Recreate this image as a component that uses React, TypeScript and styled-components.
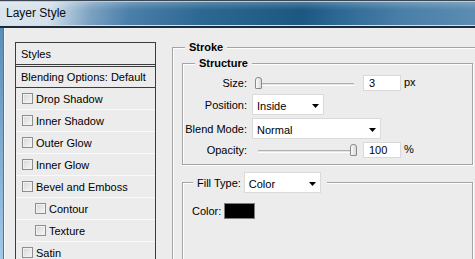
import React from "react";
import styled, { createGlobalStyle } from "styled-components";

const GlobalStyle = createGlobalStyle`
  html, body { margin: 0; padding: 0; width: 475px; height: 259px; overflow: hidden; background: #ececec; }
  #root { width: 475px; height: 259px; }
  * { box-sizing: border-box; }
`;

const UI_FONT = `"Liberation Sans", Arial, sans-serif`;

const Window = styled.div`
  width: 475px;
  height: 259px;
  display: flex;
  flex-direction: column;
  overflow: hidden;
  background: #ececec;
  font-family: ${UI_FONT};
  font-size: 11px;
  color: #000;
`;

const TitleBar = styled.div`
  flex: 0 0 28px;
  display: flex;
  align-items: center;
  padding: 0 0 1px 6px;
  border-top: 1px solid #3b4650;
  border-bottom: 2px solid #1b2b39;
  box-shadow: inset 0 -1px 0 #cfe0ee, inset 0 1px 0 #b9cfe0;
  background:
    linear-gradient(to bottom, rgba(255,255,255,0.25) 0, rgba(255,255,255,0.1) 5px, rgba(255,255,255,0) 9px),
    linear-gradient(100deg, #d9e4ed 0, #d6e1eb 50px, #aac3d8 70px, #7aa1c1 92px, #4a7fa9 130px, #2d6893 200px, #1c5782 300px, #2c6894 335px, #4a7fa8 400px, #5d8db2 475px);
`;

const Title = styled.span`
  font-family: "Liberation Sans", Arial, sans-serif;
  font-size: 12px;
  color: #0b0b0b;
`;

const Body = styled.div`
  flex: 1;
  display: flex;
  min-height: 0;
`;

const Frame = styled.div`
  flex: 0 0 5px;
  background:
    linear-gradient(to right, transparent 0 3px, #62717f 3px 4px, #f6f9fb 4px 5px),
    linear-gradient(to bottom, #5a8db6, #a3c8e6);
`;

const Content = styled.div`
  flex: 1;
  display: flex;
  align-items: flex-start;
  gap: 16px;
  padding: 14px 0 0 10px;
  overflow: hidden;
`;

const StylesPanel = styled.div`
  flex: 0 0 141px;
  width: 141px;
  height: 240px;
  border: 1px solid #3c3c3c;
  border-bottom: none;
  display: flex;
  flex-direction: column;
`;

const PanelHead = styled.div<{ $double?: boolean }>`
  height: ${(p) => (p.$double ? 24 : 21)}px;
  display: flex;
  align-items: center;
  padding-left: 5px;
  border-bottom: ${(p) => (p.$double ? "3px double #3c3c3c" : "1px solid #3c3c3c")};
  white-space: nowrap;
`;

const PanelItem = styled.div<{ $indent?: boolean }>`
  flex: 0 0 22px;
  display: flex;
  align-items: center;
  gap: 3px;
  padding-left: ${(p) => (p.$indent ? 19 : 6)}px;
  border-bottom: 1px solid #f9f9f9;
  white-space: nowrap;
`;

const Check = styled.span`
  width: 11px;
  height: 11px;
  border: 1px solid #8e8e8e;
  background: linear-gradient(135deg, #d6d6d6, #f7f7f7);
  box-shadow: inset 0 0 0 1px #f1f1f1;
`;

const Group = styled.fieldset<{ $w: number; $h?: number }>`
  margin: 0;
  width: ${(p) => p.$w}px;
  ${(p) => (p.$h ? `height: ${p.$h}px;` : "")}
  min-width: 0;
  flex-shrink: 0;
  border: 1px solid #a4a4a4;
  box-shadow: inset 1px 1px 0 #fdfdfd, 1px 1px 0 #fdfdfd;
`;

const StrokeGroup = styled(Group)`
  margin-top: -2px;
  padding: 2px 9px 0 9px;
`;

const SubGroup = styled(Group)`
  padding: 0;
`;

const FillGroup = styled(Group)`
  margin-top: 7px;
  padding: 10px 0 0 9px;
`;

const Legend = styled.legend<{ $ml: number }>`
  margin-left: ${(p) => p.$ml}px;
  padding: 0 4px;
  height: 14px;
  line-height: 14px;
  font-weight: bold;
  background: #ececec;
`;

const ControlLegend = styled.legend`
  margin-left: 1px;
  padding: 0 6px 0 4px;
  display: flex;
  align-items: center;
  gap: 3px;
  background: #ececec;
`;

const FormGrid = styled.div`
  display: grid;
  grid-template-columns: 64px auto;
  column-gap: 5px;
  row-gap: 3px;
  align-items: center;
  padding: 5px 0 6px 0;
`;

const Label = styled.span`
  text-align: right;
  white-space: nowrap;
`;

const Controls = styled.div`
  display: flex;
  align-items: center;
  height: 16px;
`;

const SliderBox = styled.div`
  position: relative;
  width: 102px;
  height: 14px;
  margin-left: 3px;
  margin-right: 6px;
`;

const Track = styled.div`
  position: absolute;
  left: 3px;
  right: 3px;
  top: 7px;
  height: 3px;
  border-top: 1px solid #b0b0b0;
  border-bottom: 1px solid #fdfdfd;
  background: #e4e4e4;
`;

const Thumb = styled.div`
  position: absolute;
  top: 1px;
  width: 7px;
  height: 12px;
  border: 1px solid #8a8a8a;
  border-radius: 3px 3px 1px 1px;
  background: linear-gradient(to right, #fafafa, #d9d9d9);
`;

const NumInput = styled.div`
  width: 38px;
  height: 16px;
  border: 1px solid #d9d9d9;
  background: #fff;
  padding-left: 5px;
  display: flex;
  align-items: center;
`;

const Unit = styled.span`
  margin-left: 3px;
  margin-top: -3px;
`;

const SelectBox = styled.div<{ $w: number }>`
  width: ${(p) => p.$w}px;
  height: 21px;
  border: 1px solid #dadada;
  background: #fff;
  display: flex;
  align-items: center;
  justify-content: space-between;
  padding: 2px 4px 0 4px;
`;

const ColorRow = styled.div`
  display: flex;
  align-items: center;
  gap: 3px;
`;

const Swatch = styled.div`
  width: 31px;
  height: 16px;
  background: #000;
  border: 1px solid #7e7e7e;
`;

function Arrow() {
  return (
    <svg width="7" height="4" viewBox="0 0 7 4">
      <polygon points="0,0 7,0 3.5,4" fill="#000" />
    </svg>
  );
}

function Select({ value, width }: { value: string; width: number }) {
  return (
    <SelectBox $w={width}>
      <span>{value}</span>
      <Arrow />
    </SelectBox>
  );
}

function Slider({ value }: { value: number }) {
  return (
    <SliderBox>
      <Track />
      <Thumb style={{ left: `${(value / 100) * 95}px` }} />
    </SliderBox>
  );
}

const items: { label: string; indent?: boolean }[] = [
  { label: "Drop Shadow" },
  { label: "Inner Shadow" },
  { label: "Outer Glow" },
  { label: "Inner Glow" },
  { label: "Bevel and Emboss" },
  { label: "Contour", indent: true },
  { label: "Texture", indent: true },
  { label: "Satin" },
];

export default function App() {
  return (
    <>
      <GlobalStyle />
      <Window>
        <TitleBar>
          <Title>Layer Style</Title>
        </TitleBar>
        <Body>
          <Frame />
          <Content>
            <StylesPanel>
              <PanelHead $double>Styles</PanelHead>
              <PanelHead>Blending Options: Default</PanelHead>
              {items.map((it) => (
                <PanelItem key={it.label} $indent={it.indent}>
                  <Check />
                  <span>{it.label}</span>
                </PanelItem>
              ))}
            </StylesPanel>
            <StrokeGroup $w={311} $h={240}>
              <Legend $ml={3}>Stroke</Legend>
              <SubGroup $w={291}>
                <Legend $ml={12}>Structure</Legend>
                <FormGrid>
                  <Label>Size:</Label>
                  <Controls>
                    <Slider value={0} />
                    <NumInput>3</NumInput>
                    <Unit>px</Unit>
                  </Controls>
                  <Label>Position:</Label>
                  <Select value="Inside" width={72} />
                  <Label>Blend Mode:</Label>
                  <Select value="Normal" width={129} />
                  <Label>Opacity:</Label>
                  <Controls>
                    <Slider value={100} />
                    <NumInput>100</NumInput>
                    <Unit>%</Unit>
                  </Controls>
                </FormGrid>
              </SubGroup>
              <FillGroup $w={291} $h={100}>
                <ControlLegend>
                  <span>Fill Type:</span>
                  <Select value="Color" width={77} />
                </ControlLegend>
                <ColorRow>
                  <span>Color:</span>
                  <Swatch />
                </ColorRow>
              </FillGroup>
            </StrokeGroup>
          </Content>
        </Body>
      </Window>
    </>
  );
}
